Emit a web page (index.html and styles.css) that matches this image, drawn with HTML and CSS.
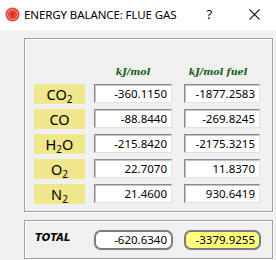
FILE: index.html
```html
<!DOCTYPE html>
<html>
<head>
<meta charset="utf-8">
<link rel="stylesheet" href="styles.css">
</head>
<body>
<div class="window">
  <div class="titlebar">
    <svg class="app-icon" width="15" height="15" viewBox="0 0 15 15">
      <circle cx="7.5" cy="7.5" r="7" fill="#e8443a"/>
      <circle cx="7.5" cy="7.5" r="5" fill="none" stroke="#f59a90" stroke-width="1"/>
      <path d="M6 6.5 Q7.5 5 9 6.5 M7.5 6 L7.5 9.5 M6.3 9 L8.7 9" fill="none" stroke="#b52a22" stroke-width="0.9"/>
    </svg>
    <span class="title">ENERGY BALANCE: FLUE GAS</span>
    <span class="help">?</span>
    <svg class="close" width="11" height="11" viewBox="0 0 11 11">
      <path d="M0.5 0.5 L10.5 10.5 M10.5 0.5 L0.5 10.5" stroke="#222" stroke-width="1.1"/>
    </svg>
  </div>
  <div class="content">
    <div class="group main-group">
      <div class="grid">
        <div></div>
        <div class="unit">kJ/mol</div>
        <div class="unit unit-fuel">kJ/mol fuel</div>

        <div class="label">CO<sub>2</sub></div>
        <div class="field">-360.1150</div>
        <div class="field">-1877.2583</div>

        <div class="label">CO</div>
        <div class="field">-88.8440</div>
        <div class="field">-269.8245</div>

        <div class="label">H<sub>2</sub>O</div>
        <div class="field">-215.8420</div>
        <div class="field">-2175.3215</div>

        <div class="label">O<sub>2</sub></div>
        <div class="field">22.7070</div>
        <div class="field">11.8370</div>

        <div class="label">N<sub>2</sub></div>
        <div class="field">21.4600</div>
        <div class="field">930.6419</div>
      </div>
    </div>
    <div class="group total-group">
      <div class="total-row">
        <div class="total-label">TOTAL</div>
        <div class="total-field">-620.6340</div>
        <div class="total-field yellow">-3379.9255</div>
      </div>
    </div>
  </div>
</div>
</body>
</html>
```

FILE: styles.css
```css
* { box-sizing: border-box; }
html, body { margin: 0; padding: 0; }
body {
  width: 276px;
  height: 260px;
  overflow: hidden;
  font-family: "Noto Sans", "Open Sans", sans-serif;
  background: #f0f0f0;
}
.window { width: 276px; height: 260px; display: flex; flex-direction: column; }
.titlebar {
  height: 30px;
  background: #ffffff;
  display: flex;
  align-items: center;
  padding-left: 5px;
  flex-shrink: 0;
}
.app-icon { margin-top: -2px; }
.title {
  margin-left: 4px;
  font-size: 11.5px;
  color: #000;
  letter-spacing: -0.1px;
  margin-top: -2px;
}
.help {
  margin-left: 30px;
  font-size: 13px;
  color: #000;
  margin-top: -3px;
}
.close { margin-left: 37px; margin-top: -2px; }

.content {
  flex: 1;
  padding: 8px 3px 0 24px;
  display: flex;
  flex-direction: column;
  gap: 8px;
}
.group {
  border: 1px solid #a0a0a0;
  box-shadow: inset 1px 1px 0 #ffffff, 1px 1px 0 #ffffff;
}
.main-group { height: 174px; padding: 26px 0 0 9px; }
.grid {
  display: grid;
  grid-template-columns: 51px 78px 79px;
  column-gap: 9px;
  row-gap: 5px;
  grid-template-rows: 14px repeat(5, 20px);
}
.grid > :nth-child(3n) { margin-left: 3px; }
.unit {
  font-family: "DejaVu Serif", "Liberation Serif", serif;
  font-style: italic;
  font-weight: bold;
  font-size: 9.5px;
  color: #0f5a14;
  text-align: center;
  line-height: 14px;
  margin-bottom: 4px;
}
.unit-fuel { padding-right: 8px; }
.grid > .unit { align-self: start; }
.grid { row-gap: 5px; }
.grid > div:nth-child(-n+3) { margin-bottom: 4px; }
.label {
  background: #f0e68c;
  font-size: 14.5px;
  line-height: 20px;
  text-align: center;
  color: #000;
}
.label sub { font-size: 10px; vertical-align: -3px; line-height: 0; }
.field {
  height: 19px;
  background: #ffffff;
  border: 1px solid;
  border-color: #8a8a8a #e2e2e2 #e2e2e2 #8a8a8a;
  box-shadow: inset 1px 1px 0 #c4c4c4;
  font-size: 11.5px;
  line-height: 17px;
  text-align: right;
  padding-right: 4px;
  color: #000;
}
.total-group { height: 39px; padding: 9px 0 0 10px; }
.total-row {
  display: grid;
  grid-template-columns: 50px 79px 79px;
  column-gap: 9px;
  align-items: center;
}
.total-row > :nth-child(3) { margin-left: 2px; }
.total-label {
  font-family: "DejaVu Sans", "Liberation Sans", sans-serif;
  font-weight: bold;
  font-style: italic;
  font-size: 10px;
  color: #000;
  margin-top: -5px;
}
.total-field {
  height: 20px;
  border: 2px solid #7c7c7c;
  border-radius: 7px;
  background: #ffffff;
  font-size: 11.5px;
  line-height: 16px;
  text-align: right;
  padding-right: 4px;
  color: #000;
}
.total-field.yellow { background: #ffff80; }
```
